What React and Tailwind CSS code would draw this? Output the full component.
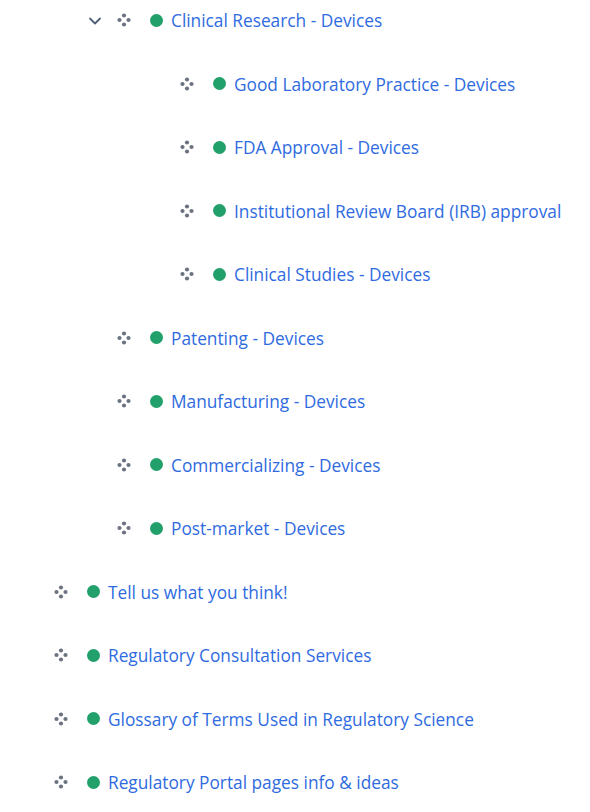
import React from "react";

const rows = [
  { level: 1, text: "Clinical Research - Devices", chevron: true },
  { level: 2, text: "Good Laboratory Practice - Devices" },
  { level: 2, text: "FDA Approval - Devices" },
  { level: 2, text: "Institutional Review Board (IRB) approval" },
  { level: 2, text: "Clinical Studies - Devices" },
  { level: 1, text: "Patenting - Devices" },
  { level: 1, text: "Manufacturing - Devices" },
  { level: 1, text: "Commercializing - Devices" },
  { level: 1, text: "Post-market - Devices" },
  { level: 0, text: "Tell us what you think!" },
  { level: 0, text: "Regulatory Consultation Services" },
  { level: 0, text: "Glossary of Terms Used in Regulatory Science" },
  { level: 0, text: "Regulatory Portal pages info & ideas" },
];

function Handle() {
  return (
    <svg width="14" height="14" viewBox="0 0 14 14" className="shrink-0">
      <circle cx="7" cy="2.5" r="2.1" fill="#6b7280" />
      <circle cx="2.5" cy="7" r="2.1" fill="#6b7280" />
      <circle cx="11.5" cy="7" r="2.1" fill="#6b7280" />
      <circle cx="7" cy="11.5" r="2.1" fill="#6b7280" />
    </svg>
  );
}

function Chevron() {
  return (
    <svg width="14" height="14" viewBox="0 0 14 14" className="shrink-0">
      <path d="M2 4.5 L7 9.5 L12 4.5" fill="none" stroke="#505f79" strokeWidth="1.8" strokeLinecap="round" strokeLinejoin="round" />
    </svg>
  );
}

const indent = ["pl-[54px]", "pl-[117px]", "pl-[180px]"];

export default function App() {
  return (
    <div className="w-[590px] h-[812px] bg-white overflow-hidden" style={{ fontFamily: '"Open Sans", "Noto Sans", sans-serif' }}>
      <div className="flex flex-col gap-[23.5px]">
        {rows.map((r, i) => (
          <div key={i} className={`relative flex h-10 items-center ${indent[r.level]}`}>
            {r.chevron && (
              <div className="absolute left-[88px] top-[14px]">
                <Chevron />
              </div>
            )}
            <Handle />
            <span className="ml-[19px] h-[13px] w-[13px] shrink-0 rounded-full bg-[#22a06b]" />
            <span className="ml-[8px] mt-[2px] whitespace-nowrap text-[17.3px] font-[370] text-[#2f6be0]">{r.text}</span>
          </div>
        ))}
      </div>
    </div>
  );
}
